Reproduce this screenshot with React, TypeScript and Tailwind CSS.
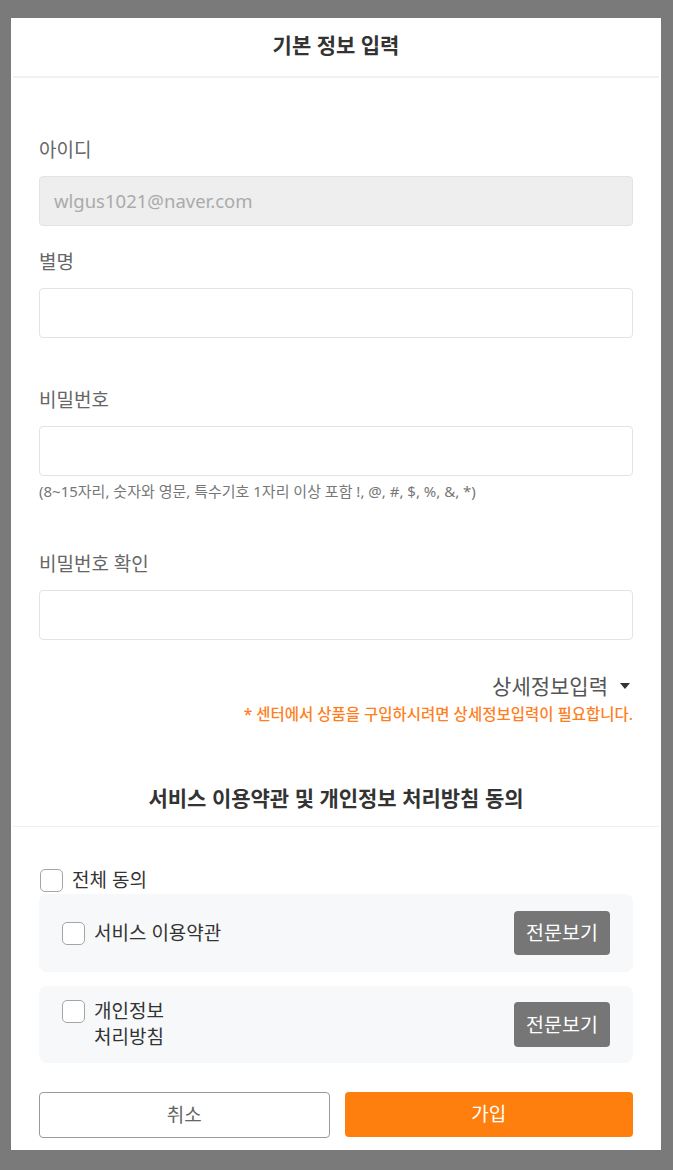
import React from 'react';

const font = { fontFamily: '"Noto Sans", "Noto Sans CJK KR", sans-serif' };

const Checkbox = () => (
  <span className="inline-block w-[23px] h-[23px] shrink-0 rounded-[5px] border-[1.5px] border-[#a5a5a5] bg-white" />
);

const Label = ({ children }: { children: React.ReactNode }) => (
  <p className="text-[19px] leading-[26px] text-[#666]">{children}</p>
);

const Input = ({ value, disabled }: { value?: string; disabled?: boolean }) => (
  <div
    className={
      'mt-[13px] h-[50px] w-full rounded-[4px] border border-[#e3e3e3] flex items-center px-[14px] text-[18.5px] ' +
      (disabled ? 'bg-[#eeeeee] text-[#aaaaaa]' : 'bg-white')
    }
  >
    {value}
  </div>
);

export default function App() {
  return (
    <div className="min-h-[1170px] w-full bg-[#7a7a7a] pt-[18px] pl-[11px] pr-[12px] pb-[20px]" style={font}>
      <div className="bg-white w-[650px] h-[1132px] flex flex-col">
        {/* header */}
        <div className="h-[58px] flex items-center justify-center text-[21px] font-semibold text-[#333] pb-[2px]">
          기본 정보 입력
        </div>
        <div className="mx-[2px] h-[2px] bg-[#f2f2f2]" />

        <div className="px-[28px] flex flex-col">
          <div className="mt-[59px]">
            <Label>아이디</Label>
            <Input value="wlgus1021@naver.com" disabled />
          </div>
          <div className="mt-[23px]">
            <Label>별명</Label>
            <Input />
          </div>
          <div className="mt-[49px]">
            <Label>비밀번호</Label>
            <Input />
            <p className="mt-[5px] text-[15px] leading-[20px] text-[#777]">
              (8~15자리, 숫자와 영문, 특수기호 1자리 이상 포함 !, @, #, $, %, &amp;, *)
            </p>
          </div>
          <div className="mt-[50px]">
            <Label>비밀번호 확인</Label>
            <Input />
          </div>

          <div className="mt-[33px] flex justify-end items-center gap-[12px] text-[21px] leading-[26px] text-[#555]">
            <span>상세정보입력</span>
            <span className="inline-block w-0 h-0 border-l-[5px] border-r-[5px] border-t-[6px] border-l-transparent border-r-transparent border-t-[#333] mr-[3px]" />
          </div>
          <p className="mt-[5px] text-right text-[15.5px] leading-[20px] text-[#ff7f1f] font-medium">
            * 센터에서 상품을 구입하시려면 상세정보입력이 필요합니다.
          </p>

          <p className="mt-[60px] text-center text-[21px] leading-[28px] font-semibold text-[#333]">
            서비스 이용약관 및 개인정보 처리방침 동의
          </p>
        </div>
        <div className="mt-[14px] mx-[2px] h-[1px] bg-[#eeeeee]" />

        <div className="px-[28px] flex flex-col">
          <div className="mt-[41px] flex items-center gap-[9px] pl-[1px] h-[24px]">
            <Checkbox />
            <span className="text-[19px] text-[#333]">전체 동의</span>
          </div>

          <div className="mt-[2px] h-[78px] rounded-[8px] bg-[#f7f8fa] flex items-center justify-between pl-[23px] pr-[23px]">
            <div className="flex items-center gap-[9px]">
              <Checkbox />
              <span className="text-[19px] text-[#333]">서비스 이용약관</span>
            </div>
            <button className="w-[96px] h-[44px] rounded-[4px] bg-[#767676] text-white text-[19.5px]">전문보기</button>
          </div>

          <div className="mt-[14px] h-[77px] rounded-[8px] bg-[#f7f8fa] flex items-center justify-between pl-[23px] pr-[23px]">
            <div className="flex items-start gap-[9px]">
              <Checkbox />
              <span className="text-[19px] leading-[26px] text-[#333] -mt-[2px]">
                개인정보
                <br />
                처리방침
              </span>
            </div>
            <button className="w-[96px] h-[45px] rounded-[4px] bg-[#767676] text-white text-[19.5px]">전문보기</button>
          </div>

          <div className="mt-[29px] flex gap-[15px]">
            <button className="flex-1 h-[46px] rounded-[4px] border-[1.5px] border-[#9a9a9a] bg-white text-[19px] text-[#666]">
              취소
            </button>
            <button className="flex-1 h-[45px] rounded-[4px] bg-[#ff7f0e] text-white text-[19px]">가입</button>
          </div>
        </div>
      </div>
    </div>
  );
}
